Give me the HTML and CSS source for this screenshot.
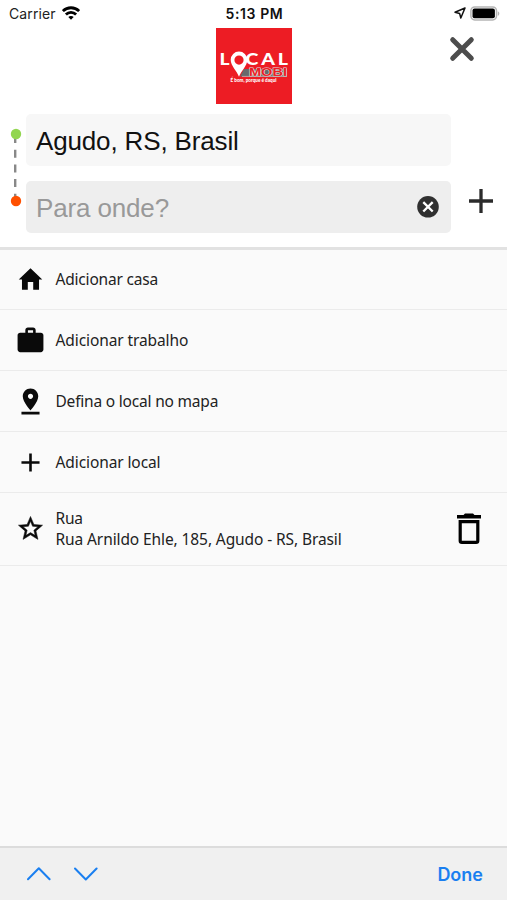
FILE: index.html
```html
<!DOCTYPE html>
<html lang="pt-BR">
<head>
    <meta charset="UTF-8">
    <meta name="viewport" content="width=device-width, initial-scale=1.0">
    <title>Local Mobi</title>
    <link rel="stylesheet" href="styles.css">
</head>
<body>
    <div class="app">
        <!-- Status bar -->
        <div class="status-bar">
            <div class="carrier">
                <span>Carrier</span>
                <svg width="18" height="14" viewBox="0 0 18 14" fill="none" stroke="#000" stroke-width="2.8">
                    <path d="M.9 5.1C5.4.6 12.6.6 17.1 5.1"/>
                    <path d="M3.9 8.5c2.8-2.8 7.4-2.8 10.2 0"/>
                    <path d="M9 13.8l-2.7-2.8c1.5-1.4 3.9-1.4 5.4 0z" fill="#000" stroke="none"/>
                </svg>
            </div>
            <div class="time">5:13 PM</div>
            <div class="battery">
                <svg width="12" height="12" viewBox="0 0 12 12" fill="none" stroke="#111" stroke-width="1.5" stroke-linejoin="round">
                    <path d="M11 1L1 5.3l4.6 1.1L6.8 11z"/>
                </svg>
                <svg width="30" height="15" viewBox="0 0 30 15">
                    <rect x=".9" y=".9" width="25.6" height="13" rx="3.8" fill="#fff" stroke="#b5b5b5" stroke-width="1.5"/>
                    <rect x="2.5" y="2.6" width="22.4" height="9.7" rx="2" fill="#000"/>
                    <path d="M27.8 5.2c2 .8 2 3.8 0 4.6z" fill="#b5b5b5"/>
                </svg>
            </div>
        </div>

        <!-- Logo and close button -->
        <div class="top">
            <svg class="logo" width="76" height="76" viewBox="0 0 76 76">
                <rect width="76" height="76" fill="#ed1c24"/>
                <path d="M28 41h43v7.500H24z" fill="#666a6c"/>
                <g font-family="Lato, sans-serif" font-weight="900" fill="#fff">
                    <text x="3.500" y="37" font-size="17" textLength="10" lengthAdjust="spacingAndGlyphs">L</text>
                    <text class="logo-name" transform="translate(29.500 37) scale(1.150 1)" font-size="17" textLength="37">CAL</text>
                    <text class="logo-mobi" x="33" y="47.500" font-size="10.500" textLength="38" lengthAdjust="spacingAndGlyphs">MOBI</text>
                    <text x="14.500" y="54" font-size="4.600" textLength="46" lengthAdjust="spacingAndGlyphs">É bom, porque é daqui</text>
                </g>
                <path d="M23 23.500a8.300 8.300 0 0 0-8.300 8.300c0 6 6.300 11.500 8.300 17 2-5.500 8.300-11 8.300-17A8.300 8.300 0 0 0 23 23.500zm0 4a4.600 4.600 0 1 1 0 9.200 4.600 4.600 0 0 1 0-9.200z" fill="#fff" fill-rule="evenodd"/>
                <path d="M26 48.400h45" stroke="#bbb" stroke-width=".8"/>
            </svg>
            <button class="close" aria-label="Fechar">
                <svg width="26" height="26" viewBox="0 0 26 26" stroke="#4d4d4d" stroke-width="5" stroke-linecap="round">
                    <path d="M3.700 3.700l18.600 18.600M22.300 3.700L3.700 22.300"/>
                </svg>
            </button>
        </div>

        <!-- Origin and destination -->
        <div class="route">
            <svg class="route-line" width="12" height="80" viewBox="0 0 12 80">
                <path d="M5.200 7v66" stroke="#888" stroke-width="2.400" stroke-dasharray="8 6.700"/>
                <circle cx="6" cy="6" r="5.200" fill="#92d650"/>
                <circle cx="6" cy="73" r="5.200" fill="#ff5000"/>
            </svg>
            <div class="fields">
                <div class="field">Agudo, RS, Brasil</div>
                <div class="field active">
                    <span class="placeholder">Para onde?</span>
                    <svg width="22" height="22" viewBox="0 0 22 22">
                        <circle cx="11" cy="10.800" r="10.800" fill="#303030"/>
                        <path d="M6.300 6.100l9.400 9.400M15.700 6.100l-9.400 9.400" stroke="#fff" stroke-width="2.300"/>
                    </svg>
                </div>
            </div>
            <button class="add-stop" aria-label="Adicionar parada">
                <svg width="24" height="24" viewBox="0 0 24 24" stroke="#2b2b2b" stroke-width="3.300">
                    <path d="M0 12h24M12 0v24"/>
                </svg>
            </button>
        </div>

        <!-- Places list -->
        <div class="places">
            <div class="place">
                <svg class="icon" viewBox="0 0 24 24"><path d="M9.900 20v-6h4.200v6h4.500v-8h2.500L12 3.300 2.900 12h2.500v8z"/></svg>
                <p>Adicionar casa</p>
            </div>
            <div class="place">
                <svg class="icon" viewBox="0 0 24 24"><path fill-rule="evenodd" d="M20 6h-4V4c0-1.110-.89-2-2-2h-4c-1.110 0-2 .89-2 2v2H4c-1.110 0-2 .89-2 2v11c0 1.110.89 2 2 2h16c1.110 0 2-.89 2-2V8c0-1.110-.89-2-2-2zm-6 0h-4V4h4v2z"/></svg>
                <p class="work">Adicionar trabalho</p>
            </div>
            <div class="place">
                <svg class="icon" viewBox="0 0 24 24"><path d="M18 8c0-3.310-2.690-6-6-6S6 4.690 6 8c0 4.500 6 11 6 11s6-6.500 6-11zm-8 0c0-1.100.9-2 2-2s2 .9 2 2-.89 2-2 2c-1.100 0-2-.9-2-2zM5 20v2h14v-2H5z"/></svg>
                <p>Defina o local no mapa</p>
            </div>
            <div class="place">
                <svg class="icon" viewBox="0 0 24 24"><path d="M19 13h-6v6h-2v-6H5v-2h6V5h2v6h6v2z"/></svg>
                <p class="work">Adicionar local</p>
            </div>
            <div class="place saved">
                <svg class="icon star" viewBox="0 0 24 24"><path d="M22 9.240l-7.190-.62L12 2 9.190 8.630 2 9.240l5.460 4.730L5.820 21 12 17.270 18.180 21l-1.630-7.030L22 9.240zM12 15.400l-3.760 2.270 1-4.280-3.320-2.880 4.380-.38L12 6.100l1.710 4.040 4.380.38-3.320 2.880 1 4.280L12 15.400z"/></svg>
                <p>Rua<br><span class="address">Rua Arnildo Ehle, 185, Agudo - RS, Brasil</span></p>
                <svg class="trash" width="24" height="32" viewBox="0 0 24 32">
                    <path d="M0 2h6.500L8 .5h8L17.500 2H24v3.400H0z"/>
                    <path d="M3.200 8.600h17.600v19.100q0 1.700-1.700 1.700H4.900q-1.700 0-1.700-1.700z" fill="none" stroke="#000" stroke-width="3.200"/>
                </svg>
            </div>
        </div>

        <!-- Keyboard toolbar -->
        <div class="toolbar">
            <svg width="24" height="14" viewBox="0 0 24 14"><path d="M1 12.300L11.800 1.300 22.600 12.300"/></svg>
            <svg width="24" height="14" viewBox="0 0 24 14"><path d="M1 1.500l10.800 11 10.800-11"/></svg>
            <button class="done">Done</button>
        </div>
    </div>
</body>
</html>
```
FILE: styles.css
```css
* {
    box-sizing: border-box;
}
body {
    margin: 0;
    font-family: "Noto Sans", sans-serif;
    color: #222;
}
button {
    padding: 0;
    border: none;
    background: none;
    cursor: pointer;
}
svg {
    display: block;
    flex: none;
}
.app {
    display: flex;
    flex-direction: column;
    height: 900px;
    background-color: #fff;
}
/* Status bar */
.status-bar {
    display: grid;
    grid-template-columns: 1fr auto 1fr;
    align-items: center;
    height: 28px;
    padding: 0 7px 2px 9px;
    font-family: Inter, sans-serif;
    font-size: 14px;
}
.carrier, .battery {
    display: flex;
    align-items: center;
    gap: 6px;
}
.carrier {
    letter-spacing: 0.1px;
}
.battery {
    justify-content: flex-end;
    gap: 4px;
}
.time {
    font-weight: 600;
    letter-spacing: 0.6px;
    color: #111;
}
/* Logo and close button */
.top {
    display: grid;
    grid-template-columns: 1fr auto 1fr;
    height: 86px;
}
.logo {
    grid-column: 2;
}
.logo-mobi {
    font-family: "Liberation Sans", sans-serif;
    font-weight: bold;
    fill: #ed1c24;
    stroke: #ddd;
    stroke-width: 1px;
    paint-order: stroke;
}
.close {
    justify-self: end;
    align-self: start;
    margin: 8px 32px 0 0;
}
/* Origin and destination */
.route {
    display: flex;
    height: 133px;
    padding-left: 10px;
}
.route-line {
    margin-top: 14px;
}
.fields {
    width: 425px;
    margin-left: 4px;
}
.field {
    display: flex;
    align-items: center;
    justify-content: space-between;
    height: 52px;
    padding: 2px 12px 0 10px;
    border-radius: 5px;
    background-color: #f7f7f7;
    font-family: "Liberation Sans", sans-serif;
    font-size: 26px;
    letter-spacing: -0.15px;
    color: #111;
}
.field.active {
    margin-top: 15px;
    padding-top: 0;
    background-color: #eee;
}
.placeholder {
    padding-top: 2px;
    color: #999;
}
.add-stop {
    align-self: flex-start;
    margin: 75px 0 0 18px;
}
/* Places list */
.places {
    flex: 1;
    border-top: 3px solid #e2e2e2;
    background-color: #fafafa;
}
.place {
    display: flex;
    align-items: center;
    height: 61px;
    padding: 0 26px 0 15px;
    border-bottom: 1px solid #ebebeb;
}
.place:first-child {
    height: 60px;
}
.icon {
    width: 31px;
    height: 31px;
    fill: #0a0a0a;
}
.place p {
    flex: 1;
    margin: 0 0 0 9.5px;
    font-size: 15.5px;
    line-height: 21px;
    letter-spacing: -0.2px;
}
.place .work, .address {
    letter-spacing: -0.1px;
}
.place.saved {
    height: 73px;
    padding-bottom: 1px;
}
.star {
    padding: 1px;
    stroke: #0a0a0a;
    stroke-width: 0.4;
}
/* Keyboard toolbar */
.toolbar {
    display: flex;
    align-items: center;
    gap: 23px;
    height: 54px;
    padding: 0 24px 0 27px;
    border-top: 2px solid #dcdcdc;
    background-color: #f0f0f0;
}
.toolbar path {
    fill: none;
    stroke: #1a7ff0;
    stroke-width: 2;
    stroke-linecap: round;
    stroke-linejoin: round;
}
.done {
    margin-left: auto;
    font-family: Inter, sans-serif;
    font-size: 18px;
    font-weight: 600;
    color: #1a7ff0;
}
```
